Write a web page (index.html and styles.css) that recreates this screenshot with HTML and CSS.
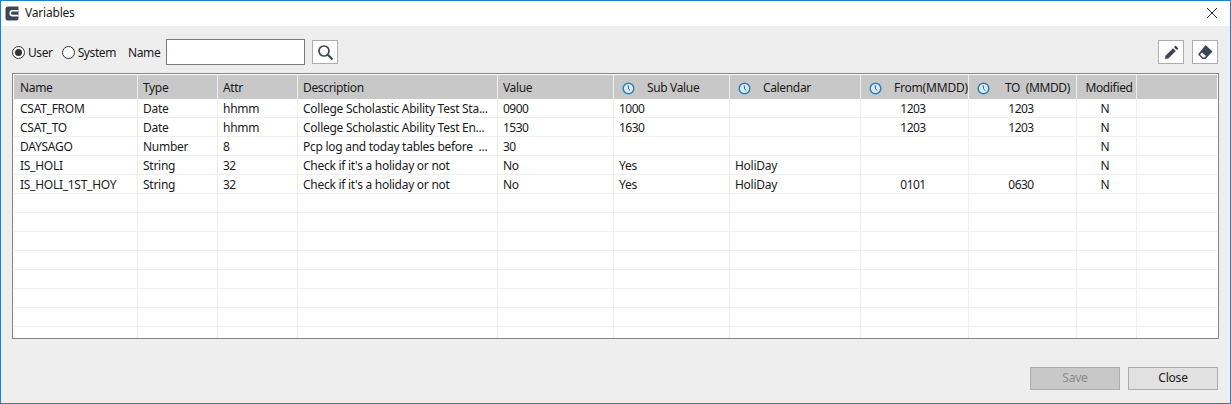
FILE: index.html
```html
<!DOCTYPE html>
<html lang="en">
  <head>
    <meta charset="UTF-8" />
    <meta name="viewport" content="width=device-width, initial-scale=1.0" />
    <title>Variables</title>
    <link rel="stylesheet" href="styles.css">
  </head>

  <body>
    <svg class="defs" width="0" height="0">
      <symbol id="clock" viewBox="0 0 13 13">
        <circle cx="6.5" cy="6.5" r="5.3" fill="#dcebf5" stroke="#2f7fb5" stroke-width="1.5" />
        <path d="M6.2 3.4 L6.5 6.5 L8 8.6" fill="none" stroke="#2a5f8a" stroke-width="1" />
      </symbol>
    </svg>

    <div class="window">
      <div class="titlebar">
        <svg class="app-icon" width="15" height="15" viewBox="0 0 15 15">
          <path d="M3 0.5 H13.5 V12 a2.5 2.5 0 0 1 -2.5 2.5 H3 a2.5 2.5 0 0 1 -2.5 -2.5 V3 a2.5 2.5 0 0 1 2.5 -2.5 Z" fill="#3e4457" />
          <path d="M13.5 4.8 H7.6 a2.4 2.4 0 0 0 0 4.8 H13.5" fill="none" stroke="#fff" stroke-width="1.6" />
        </svg>
        <span class="title">Variables</span>
        <svg class="close-x" width="12" height="12" viewBox="0 0 12 12">
          <path d="M1 1 L11 11 M11 1 L1 11" stroke="#222" stroke-width="1" fill="none" />
        </svg>
      </div>

      <div class="content">
        <div class="toolbar">
          <label class="radio"><span class="dot on"></span>User</label>
          <label class="radio"><span class="dot"></span>System</label>
          <span class="name-label">Name</span>
          <input class="name-input" type="text">
          <button class="icon-btn search-btn">
            <svg width="17" height="17" viewBox="0 0 17 17">
              <circle cx="7" cy="7" r="5" fill="none" stroke="#3e4457" stroke-width="1.7" />
              <path d="M10.8 10.8 L15.5 15.5" stroke="#3e4457" stroke-width="2.2" />
            </svg>
          </button>
          <div class="toolbar-right">
            <button class="icon-btn">
              <svg width="16" height="16" viewBox="0 0 16 16">
                <path d="M2 15 L2.5 11.7 L10 4.2 L12.8 7 L5.3 14.5 Z" fill="#3e4457" />
                <path d="M11 3.2 L12.6 1.6 L15.4 4.4 L13.8 6 Z" fill="#3e4457" />
              </svg>
            </button>
            <button class="icon-btn">
              <svg width="16" height="16" viewBox="0 0 16 16">
                <path d="M8.6 1 L15.5 7.5 L8.5 15 L5.5 15 L1 10.5 Z" fill="#3e4457" />
                <path d="M3 10.4 L5 8.5 L9 12 L7.5 13.6 L6 13.6 Z" fill="#fff" />
              </svg>
            </button>
          </div>
        </div>

        <div class="grid-frame">
          <table class="grid">
            <colgroup>
              <col class="c-name"><col class="c-type"><col class="c-attr"><col class="c-desc">
              <col class="c-value"><col class="c-sub"><col class="c-cal"><col class="c-from">
              <col class="c-to"><col class="c-mod"><col>
            </colgroup>
            <thead>
              <tr>
                <th>Name</th>
                <th>Type</th>
                <th>Attr</th>
                <th>Description</th>
                <th>Value</th>
                <th><svg class="clock"><use href="#clock" /></svg><span class="th-sub">Sub Value</span></th>
                <th><svg class="clock"><use href="#clock" /></svg><span class="th-cal">Calendar</span></th>
                <th><svg class="clock"><use href="#clock" /></svg><span class="th-from">From(MMDD)</span></th>
                <th><svg class="clock"><use href="#clock" /></svg><span class="th-to">TO&nbsp; (MMDD)</span></th>
                <th class="th-mod">Modified</th>
                <th></th>
              </tr>
            </thead>
            <tbody>
              <tr>
                <td>CSAT_FROM</td><td>Date</td><td>hhmm</td><td>College Scholastic Ability Test Sta...</td><td class="num">0900</td><td class="num">1000</td><td></td>
                <td class="mid num">1203</td><td class="mid num">1203</td><td class="mid">N</td><td></td>
              </tr>
              <tr>
                <td>CSAT_TO</td><td>Date</td><td>hhmm</td><td>College Scholastic Ability Test En...</td><td class="num">1530</td><td class="num">1630</td><td></td>
                <td class="mid num">1203</td><td class="mid num">1203</td><td class="mid">N</td><td></td>
              </tr>
              <tr>
                <td>DAYSAGO</td><td>Number</td><td class="num">8</td><td>Pcp log and today tables before &nbsp;...</td><td class="num">30</td><td></td><td></td>
                <td></td><td></td><td class="mid">N</td><td></td>
              </tr>
              <tr>
                <td>IS_HOLI</td><td>String</td><td class="num">32</td><td>Check if it's a holiday or not</td><td>No</td><td>Yes</td><td>HoliDay</td>
                <td></td><td></td><td class="mid">N</td><td></td>
              </tr>
              <tr>
                <td>IS_HOLI_1ST_HOY</td><td>String</td><td class="num">32</td><td>Check if it's a holiday or not</td><td>No</td><td>Yes</td><td>HoliDay</td>
                <td class="mid num">0101</td><td class="mid num">0630</td><td class="mid">N</td><td></td>
              </tr>
              <tr><td></td><td></td><td></td><td></td><td></td><td></td><td></td><td></td><td></td><td></td><td></td></tr>
              <tr><td></td><td></td><td></td><td></td><td></td><td></td><td></td><td></td><td></td><td></td><td></td></tr>
              <tr><td></td><td></td><td></td><td></td><td></td><td></td><td></td><td></td><td></td><td></td><td></td></tr>
              <tr><td></td><td></td><td></td><td></td><td></td><td></td><td></td><td></td><td></td><td></td><td></td></tr>
              <tr><td></td><td></td><td></td><td></td><td></td><td></td><td></td><td></td><td></td><td></td><td></td></tr>
              <tr><td></td><td></td><td></td><td></td><td></td><td></td><td></td><td></td><td></td><td></td><td></td></tr>
              <tr><td></td><td></td><td></td><td></td><td></td><td></td><td></td><td></td><td></td><td></td><td></td></tr>
              <tr class="last"><td></td><td></td><td></td><td></td><td></td><td></td><td></td><td></td><td></td><td></td><td></td></tr>
            </tbody>
          </table>
        </div>

        <div class="footer">
          <button class="btn btn-save" disabled>Save</button>
          <button class="btn btn-close">Close</button>
        </div>
      </div>
    </div>
  </body>
</html>
```

FILE: styles.css
```css
/* Page and window frame */
html,
body {
  margin: 0;
  height: 100%;
}

body {
  font-family: "Noto Sans", "Open Sans", sans-serif;
  font-size: 12px;
  letter-spacing: -0.2px;
  color: #1a1a1a;
  overflow: hidden;
}

.defs {
  display: block;
  height: 0;
}

.window {
  box-sizing: border-box;
  height: 404px;
  border: 1px solid #1883d7;
  display: flex;
  flex-direction: column;
  background-color: #eeeeee;
}

/* Title bar */
.titlebar {
  box-sizing: border-box;
  height: 25px;
  flex: none;
  background-color: #ffffff;
  display: flex;
  align-items: center;
  padding: 0 12px 1px 4px;
}

.app-icon {
  margin-right: 5px;
}

.title {
  flex: 1;
  padding-bottom: 1px;
}

/* Main area */
.content {
  flex: 1;
  display: flex;
  flex-direction: column;
  padding: 13px 11px 13px 11px;
}

.toolbar {
  height: 26px;
  display: flex;
  align-items: center;
  margin-bottom: 8px;
  letter-spacing: -0.4px;
}

.radio {
  display: flex;
  align-items: center;
  margin-right: 9px;
}

.dot {
  box-sizing: border-box;
  width: 13px;
  height: 13px;
  border: 1px solid #333;
  border-radius: 50%;
  background-color: #fff;
  margin-right: 3px;
  display: flex;
  align-items: center;
  justify-content: center;
}

.dot.on::after {
  content: "";
  width: 7px;
  height: 7px;
  border-radius: 50%;
  background-color: #333;
}

.name-label {
  margin-left: 3px;
  margin-right: 6px;
}

.name-input {
  box-sizing: border-box;
  width: 139px;
  height: 26px;
  border: 1px solid #7a7a7a;
  background-color: #fff;
  margin: 0 7px 0 0;
  padding: 0 4px;
}

.icon-btn {
  box-sizing: border-box;
  width: 26px;
  height: 24px;
  padding: 0;
  border: 1px solid #adadad;
  background-color: #fff;
  display: flex;
  align-items: center;
  justify-content: center;
}

.toolbar-right {
  margin-left: auto;
  margin-right: 1px;
  display: flex;
  gap: 8px;
}

/* Variables grid */
.grid-frame {
  box-sizing: border-box;
  height: 266px;
  border: 1px solid #82878e;
  padding: 1px 1px 0 1px;
  background-color: #fff;
  overflow: hidden;
}

.grid {
  width: 100%;
  table-layout: fixed;
  border-collapse: separate;
  border-spacing: 0;
}

.c-name { width: 124px; }
.c-type { width: 80px; }
.c-attr { width: 80px; }
.c-desc { width: 200px; }
.c-value { width: 116px; }
.c-sub { width: 116px; }
.c-cal { width: 131px; }
.c-from { width: 108px; }
.c-to { width: 108px; }
.c-mod { width: 60px; }

.grid th {
  height: 24px;
  padding: 0 0 0 5px;
  background-color: #c8c8c8;
  border-right: 1px solid #eeeeee;
  font-weight: normal;
  text-align: left;
  letter-spacing: -0.35px;
  white-space: nowrap;
  overflow: hidden;
}

.grid th:first-child,
.grid td:first-child {
  padding-left: 6px;
}

.grid th:last-child {
  border-right: 0;
}

.grid td {
  box-sizing: border-box;
  height: 19px;
  padding: 0 0 0 5px;
  border-right: 1px solid #eeeeee;
  border-bottom: 1px solid #eeeeee;
  letter-spacing: -0.27px;
  white-space: nowrap;
  overflow: hidden;
  line-height: 17px;
}

.grid td:last-child {
  border-right: 0;
}

.grid .last td {
  border-bottom: 0;
}

.grid td.num {
  letter-spacing: -0.5px;
}

.grid td.mid {
  text-align: center;
  padding: 0 3px 0 0;
}

.grid .th-mod {
  text-align: center;
  padding: 0 0 0 5px;
}

.clock {
  width: 13px;
  height: 13px;
  vertical-align: -3px;
  margin-left: 3px;
}

.th-sub { margin-left: 12px; }
.th-cal { margin-left: 12px; }
.th-from { margin-left: 12px; letter-spacing: -0.2px; }
.th-to { margin-left: 15px; }

/* Bottom buttons */
.footer {
  margin-top: auto;
  margin-right: 1px;
  display: flex;
  justify-content: flex-end;
  gap: 8px;
}

.btn {
  box-sizing: border-box;
  width: 90px;
  height: 23px;
  padding: 0 0 2px 0;
  font-family: inherit;
  font-size: 12px;
  letter-spacing: inherit;
  border: 1px solid #adadad;
}

.btn-save {
  background-color: #c8c8c8;
  color: #8a8a8a;
}

.btn-close {
  background-color: #e1e1e1;
  color: #1a1a1a;
}
```
